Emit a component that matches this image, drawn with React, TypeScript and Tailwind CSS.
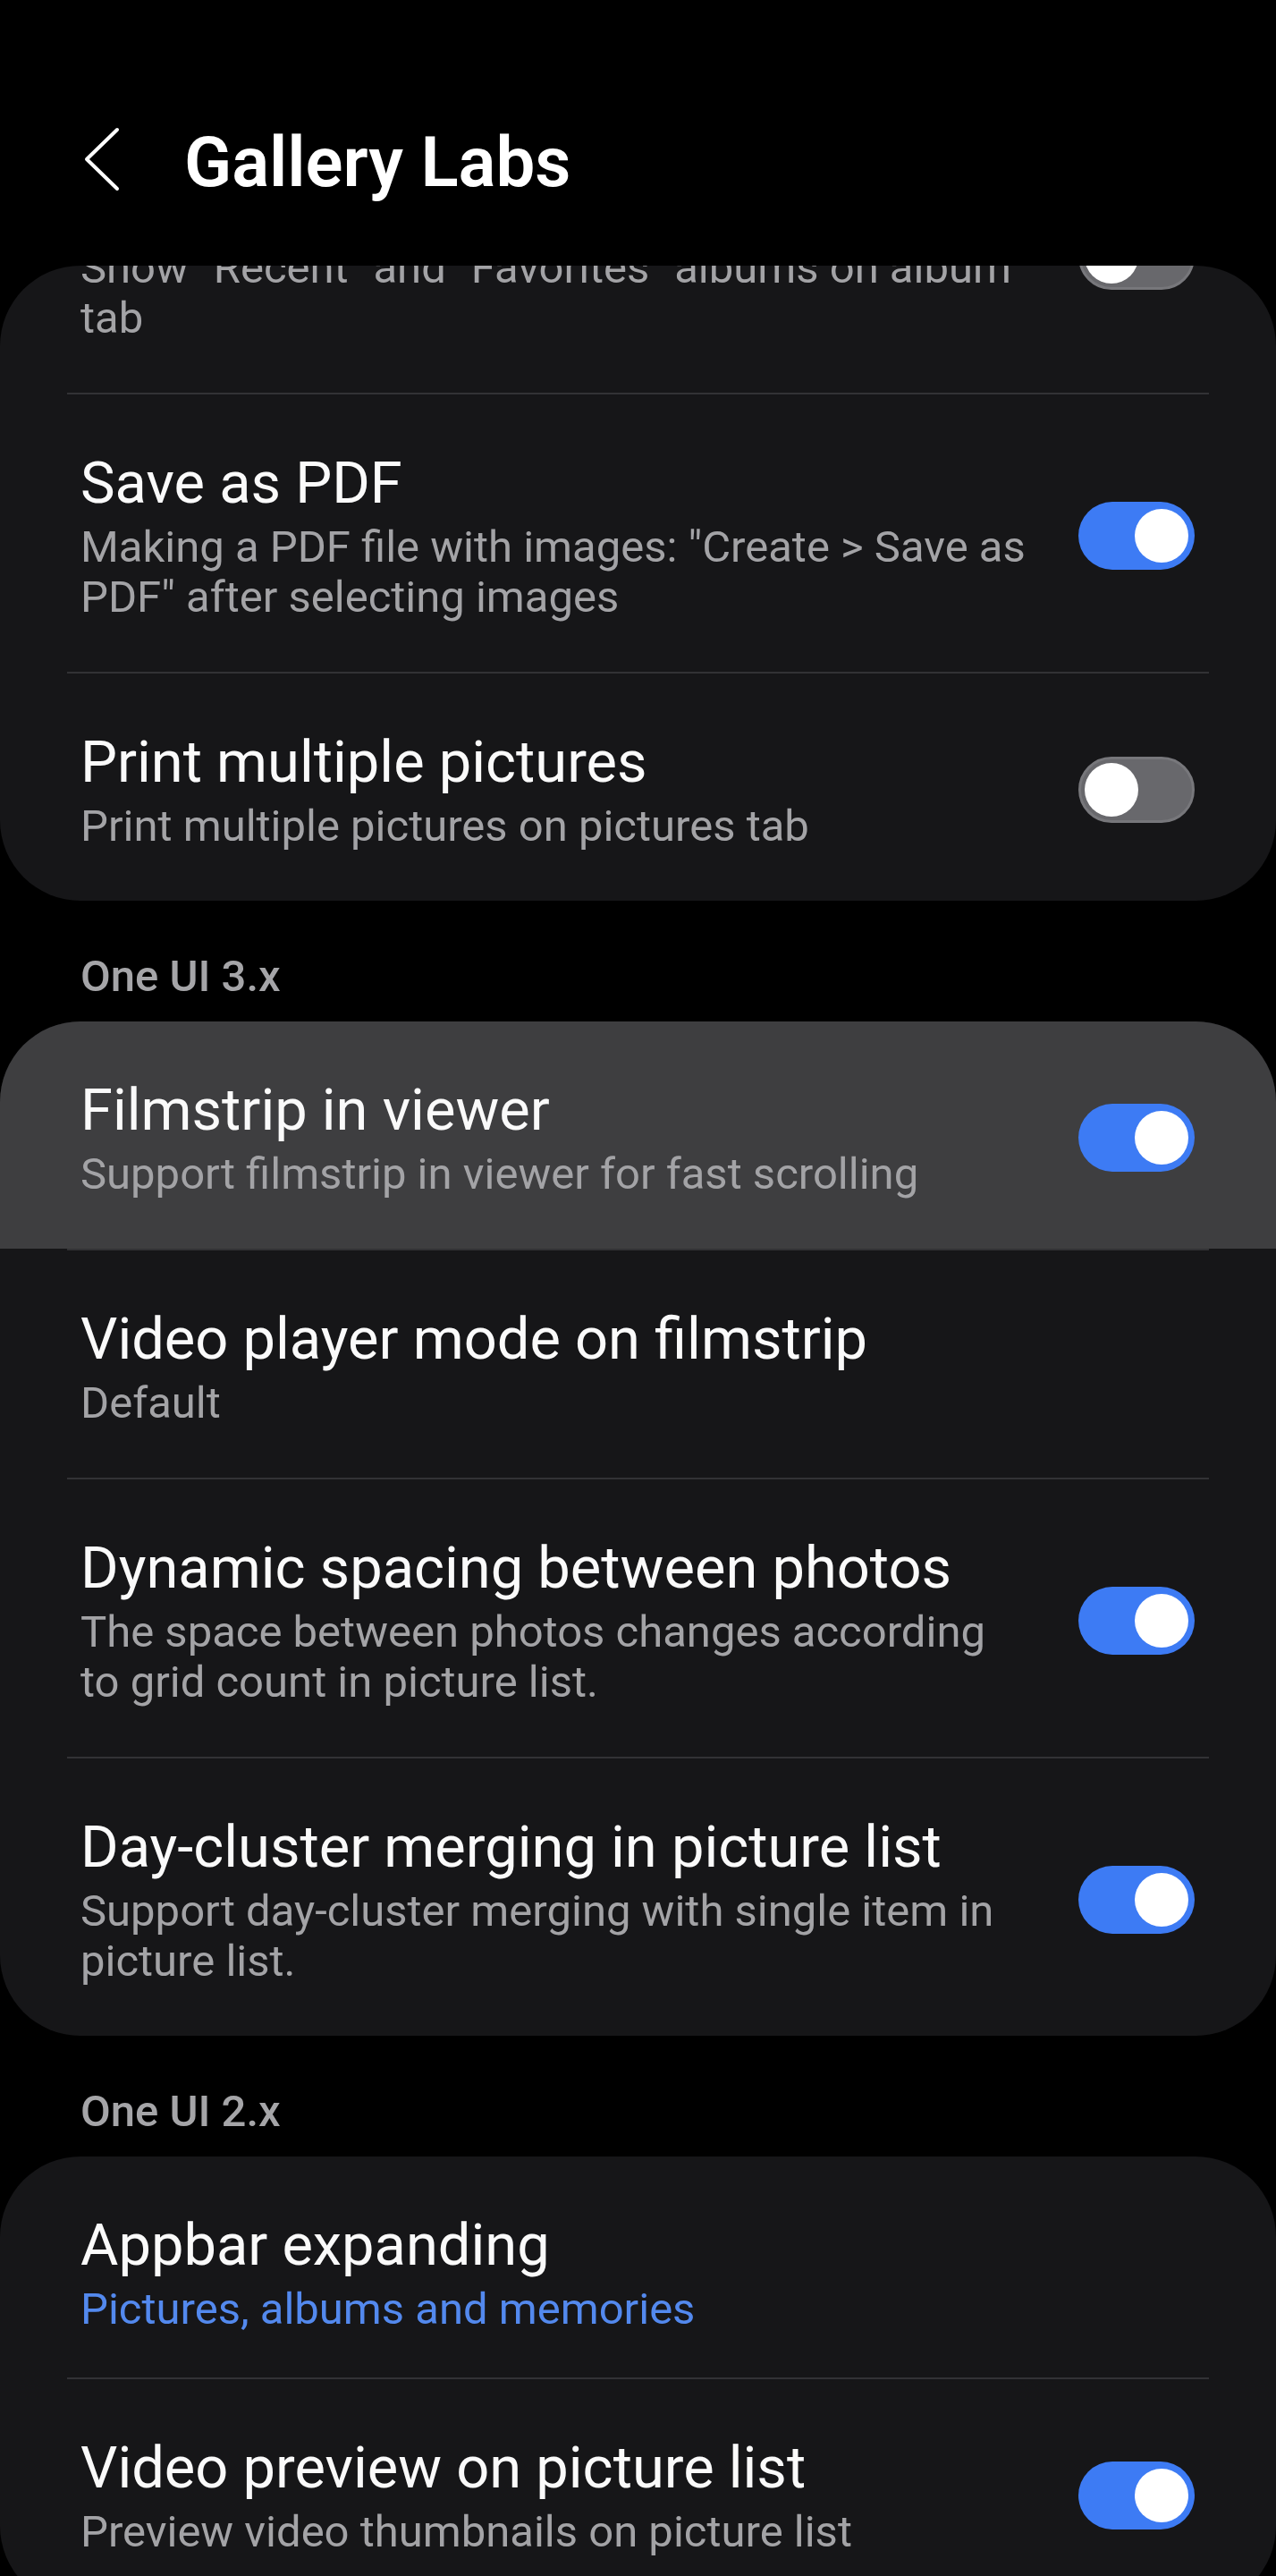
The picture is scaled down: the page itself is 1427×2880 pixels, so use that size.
import React from "react";

type Row = {
  title: string;
  lines: string[];
  toggle?: "on" | "off";
  link?: boolean;
  pressed?: boolean;
  tight?: boolean;
};

function Toggle({ on }: { on: boolean }) {
  return (
    <div
      className={
        on
          ? "relative h-[76px] w-[130px] shrink-0 rounded-full bg-[#3d7bf4]"
          : "relative h-[74px] w-[130px] shrink-0 rounded-full border-[3px] border-[#77777b] bg-[#68686c]"
      }
    >
      <div
        className={
          on
            ? "absolute top-[8px] right-[7px] h-[60px] w-[60px] rounded-full bg-white"
            : "absolute top-[4px] left-[4px] h-[60px] w-[60px] rounded-full bg-white"
        }
      />
    </div>
  );
}

function SettingRow({ row, className = "" }: { row: Row; className?: string }) {
  return (
    <div
      className={`flex items-center pt-[61px] pl-[90px] pr-[91px] ${
        row.tight ? "pb-[48px]" : "pb-[55px]"
      } ${row.pressed ? "bg-[#3e3e40]" : ""} ${className}`}
    >
      <div className="flex-1">
        <div className="h-[76px] text-[65px] leading-[76px] whitespace-nowrap text-[#fafafa]">
          {row.title}
        </div>
        <div
          className={`mt-[6px] text-[49px] leading-[56px] whitespace-nowrap ${
            row.link ? "text-[#5389ee]" : "text-[#a3a3a6]"
          }`}
        >
          {row.lines.map((l, i) => (
            <div key={i}>{l}</div>
          ))}
        </div>
      </div>
      {row.toggle && <Toggle on={row.toggle === "on"} />}
    </div>
  );
}

function Divider() {
  return <div className="mx-[75px] h-[2px] bg-[#323235]" />;
}

function Card({ rows, firstClassName }: { rows: Row[]; firstClassName?: string }) {
  return (
    <div className="overflow-hidden rounded-[90px] bg-[#161618]">
      {rows.map((r, i) => (
        <React.Fragment key={i}>
          {i > 0 && <Divider />}
          <SettingRow row={r} className={i === 0 ? firstClassName : ""} />
        </React.Fragment>
      ))}
    </div>
  );
}

function SectionLabel({ text }: { text: string }) {
  return (
    <div className="pt-[55px] pb-[20px] pl-[90px] text-[49px] leading-[60px] font-medium text-[#a5a5a8]">
      {text}
    </div>
  );
}

const labsOld: Row[] = [
  {
    title: "",
    lines: ['Show "Recent" and "Favorites" albums on album', "tab"],
    toggle: "off",
  },
  {
    title: "Save as PDF",
    lines: ['Making a PDF file with images: "Create > Save as', 'PDF" after selecting images'],
    toggle: "on",
  },
  {
    title: "Print multiple pictures",
    lines: ["Print multiple pictures on pictures tab"],
    toggle: "off",
  },
];

const oneUi3: Row[] = [
  {
    title: "Filmstrip in viewer",
    lines: ["Support filmstrip in viewer for fast scrolling"],
    toggle: "on",
    pressed: true,
  },
  {
    title: "Video player mode on filmstrip",
    lines: ["Default"],
  },
  {
    title: "Dynamic spacing between photos",
    lines: ["The space between photos changes according", "to grid count in picture list."],
    toggle: "on",
  },
  {
    title: "Day-cluster merging in picture list",
    lines: ["Support day-cluster merging with single item in", "picture list."],
    toggle: "on",
  },
];

const oneUi2: Row[] = [
  {
    title: "Appbar expanding",
    lines: ["Pictures, albums and memories"],
    link: true,
    tight: true,
  },
  {
    title: "Video preview on picture list",
    lines: ["Preview video thumbnails on picture list"],
    toggle: "on",
  },
];

export default function App() {
  return (
    <div className="h-[2880px] w-full overflow-hidden bg-black font-[Roboto,sans-serif]">
      {/* App bar */}
      <div className="h-[297px] pt-[140px]">
        <div className="flex h-[84px] items-center pl-[94px]">
          <svg
            width="40"
            height="72"
            viewBox="0 0 40 72"
            className="-mt-[8px] shrink-0"
            fill="none"
            stroke="#ffffff"
            strokeWidth="4"
            strokeLinecap="round"
            strokeLinejoin="round"
          >
            <path d="M37 3 L3 36 L37 69" />
          </svg>
          <div className="ml-[72px] text-[78px] leading-[84px] font-semibold text-white">
            Gallery Labs
          </div>
        </div>
      </div>

      <Card rows={labsOld} firstClassName="-mt-[168px]" />

      <SectionLabel text="One UI 3.x" />
      <Card rows={oneUi3} />

      <SectionLabel text="One UI 2.x" />
      <Card rows={oneUi2} />
    </div>
  );
}
